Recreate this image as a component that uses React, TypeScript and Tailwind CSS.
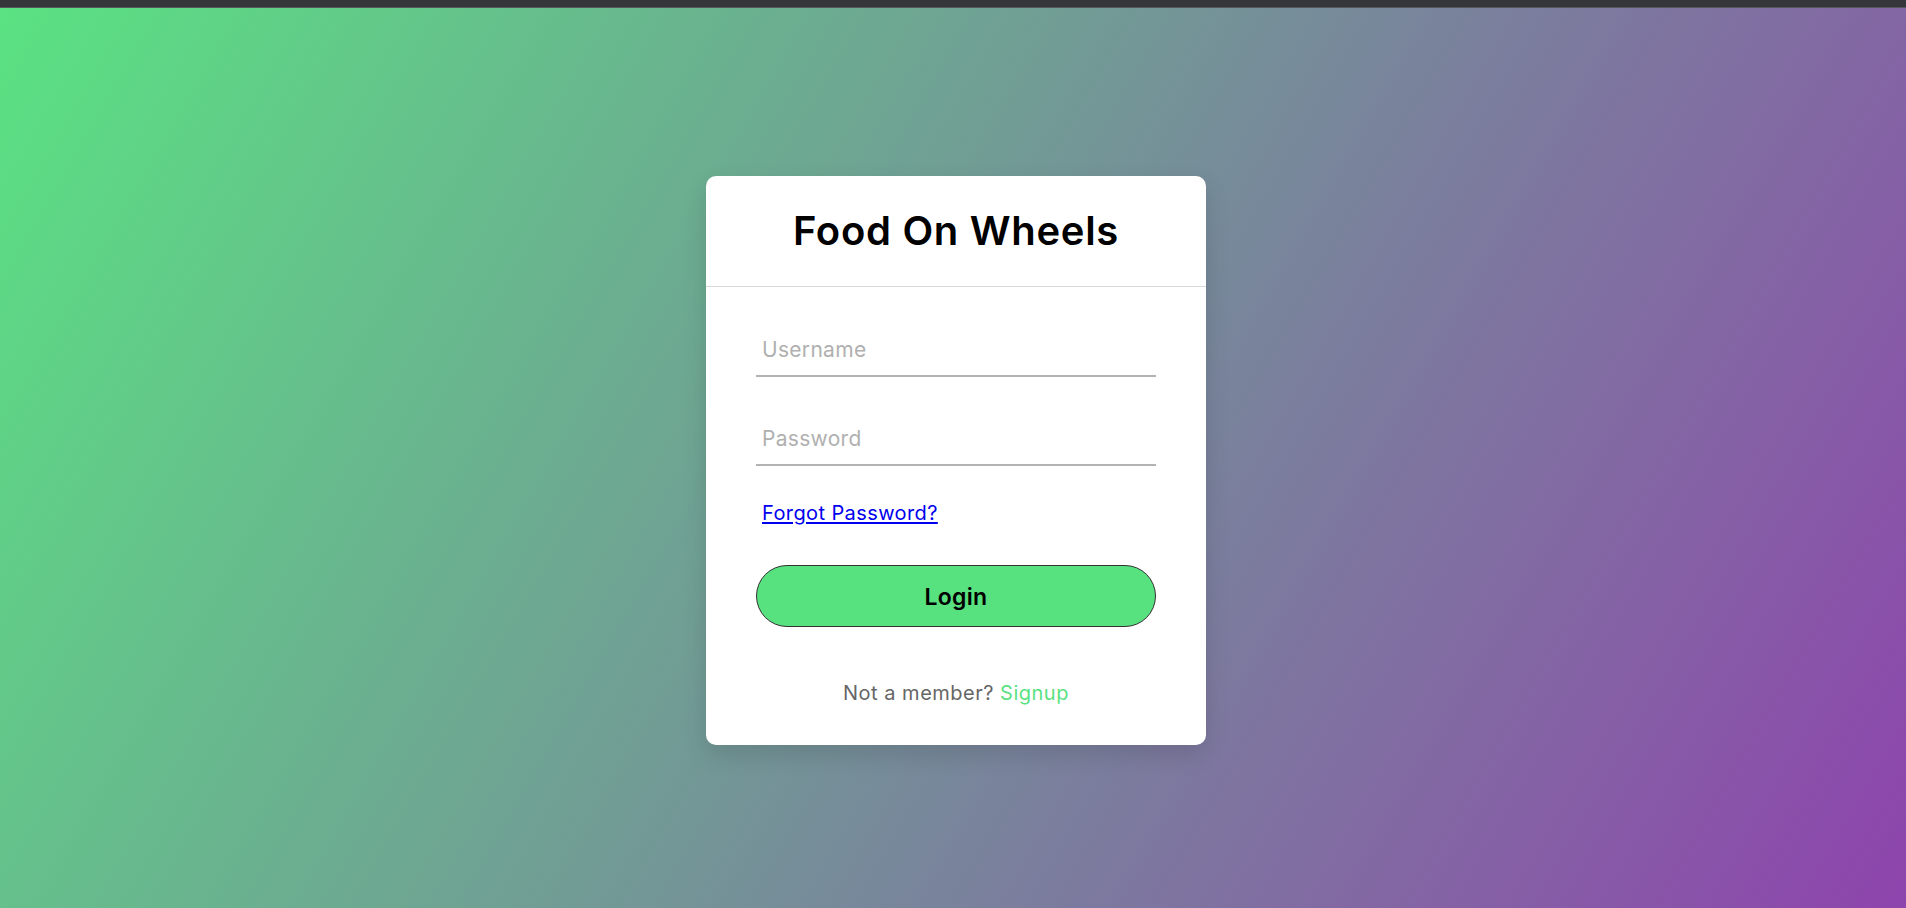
import React from "react";

const font = { fontFamily: "Inter, 'Noto Sans', sans-serif" };

export default function App() {
  return (
    <div className="w-full h-[908px] flex flex-col overflow-hidden" style={font}>
      <div className="h-[8px] bg-[#35363a] border-b border-[#55565a]" />
      <div className="flex-1 flex items-center justify-center pl-[6px] pt-[4px] bg-[linear-gradient(120deg,#5ae282,#8e44ad)]">
        <div className="w-[500px] bg-white rounded-[10px] shadow-[0_10px_25px_rgba(0,0,0,0.12)]">
          <div className="h-[111px] flex items-center justify-center border-b border-[#d9d9d9]">
            <h1 className="text-[40px] font-semibold text-black tracking-[0.7px] leading-none">Food On Wheels</h1>
          </div>
          <form className="px-[50px] pt-[38px] pb-[38px]" onSubmit={(e) => e.preventDefault()}>
            <div className="border-b-2 border-[#b3b3b3]">
              <input
                type="text"
                placeholder="Username"
                className="w-full h-[50px] px-[6px] text-[21px] tracking-[0.3px] text-[#333] placeholder:text-[#b0b0b0] outline-none bg-transparent"
              />
            </div>
            <div className="mt-[37px] border-b-2 border-[#b3b3b3]">
              <input
                type="password"
                placeholder="Password"
                className="w-full h-[50px] px-[6px] text-[21px] tracking-[0.3px] text-[#333] placeholder:text-[#b0b0b0] outline-none bg-transparent"
              />
            </div>
            <div className="mt-[32px] px-[6px] h-[30px] flex items-center">
              <a href="#" className="text-[20px] tracking-[0.4px] text-[#0000ee] underline underline-offset-2">Forgot Password?</a>
            </div>
            <button
              type="submit"
              className="mt-[37px] w-full h-[62px] pt-[3px] rounded-full border border-[#333] bg-[#58e17f] text-[23px] font-semibold tracking-[0.3px] text-black"
            >
              Login
            </button>
            <div className="mt-[52px] h-[28px] flex items-center justify-center text-[20px] tracking-[0.5px] text-[#666]">
              Not a member?&nbsp;<a href="#" className="text-[#5ae282]">Signup</a>
            </div>
          </form>
        </div>
      </div>
    </div>
  );
}
